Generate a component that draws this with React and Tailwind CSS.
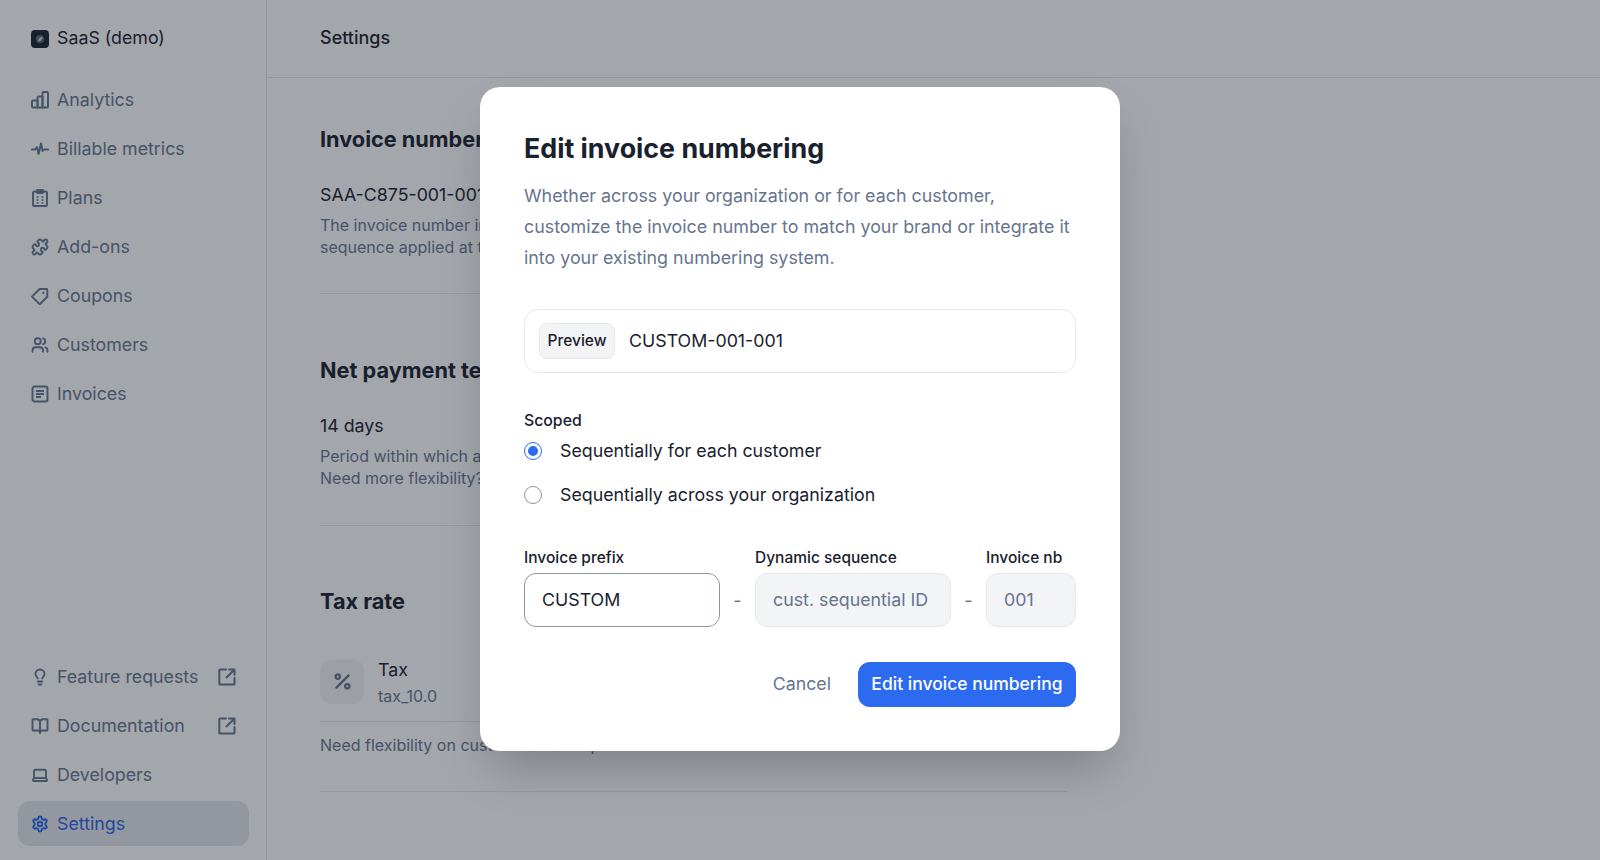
import { BookOpen, Laptop, Lightbulb, Percent, Puzzle, Settings, Users } from "lucide-react";

function ChartIcon() {
  return (
    <svg width="18" height="18" viewBox="0 0 18 18" fill="none" stroke="currentColor" strokeWidth="1.9" strokeLinejoin="round">
      <path d="M1 10.5c0-.6.4-1 1-1h4.5v7H2c-.6 0-1-.4-1-1v-5Z" />
      <path d="M6.5 6.5c0-.6.4-1 1-1h4v11h-5v-10Z" />
      <path d="M11.5 2c0-.6.4-1 1-1H16c.6 0 1 .4 1 1v13.5c0 .6-.4 1-1 1h-4.5V2Z" />
    </svg>
  );
}

function PulseIcon() {
  return (
    <svg width="18" height="18" viewBox="0 0 18 18" fill="none" stroke="currentColor" strokeWidth="2" strokeLinecap="round" strokeLinejoin="round">
      <path d="M.8 9.5h3.4L6 7l1.6 7L10 3.5 11.6 11l1.2-1.5h4.4" />
    </svg>
  );
}

function PlansIcon() {
  return (
    <svg width="18" height="18" viewBox="0 0 18 18" fill="none" stroke="currentColor" strokeWidth="1.9" strokeLinejoin="round">
      <rect x="2" y="2.5" width="14" height="14.5" rx="1.6" />
      <rect x="5.8" y="1" width="6.4" height="3" rx="0.8" fill="currentColor" />
      <path d="M5.5 8h2M5.5 11h2M5.5 14h2M10.5 8h2M10.5 11h2M10.5 14h2" strokeWidth="1.7" />
    </svg>
  );
}

function TagIcon() {
  return (
    <svg width="18" height="18" viewBox="0 0 18 18" fill="none" stroke="currentColor" strokeWidth="1.9" strokeLinejoin="round">
      <path d="M1 9.6 8.6 2h7.1c.3 0 .6.3.6.6v7.1L8.7 17.2 1 9.6Z" />
      <circle cx="12.4" cy="5.9" r="1.1" fill="currentColor" stroke="none" />
    </svg>
  );
}

function InvoiceIcon() {
  return (
    <svg width="18" height="18" viewBox="0 0 18 18" fill="none" stroke="currentColor" strokeWidth="1.9">
      <rect x="1.5" y="1.5" width="15" height="15" rx="2" />
      <path d="M5 6h8M5 9h8M5 12h5" />
    </svg>
  );
}

function ExternalIcon() {
  return (
    <svg width="18" height="18" viewBox="0 0 18 18" fill="none" stroke="currentColor" strokeWidth="2" strokeLinecap="round" strokeLinejoin="round">
      <path d="M8 1.5H2.2c-.5 0-.9.4-.9.9v13.3c0 .5.4.9.9.9h13.4c.5 0 .9-.4.9-.9V10" />
      <path d="M8.5 9.5 16 2M11 1.5h5.5V7" />
    </svg>
  );
}

function Logo() {
  return (
    <div className="flex h-[18px] w-[18px] items-center justify-center rounded-[4px] bg-[#19212e]">
      <svg width="10" height="10" viewBox="0 0 10 10" fill="none">
        <circle cx="5" cy="5" r="4" fill="#5b6678" />
        <path d="M3 7.5C3 5 5 3 7.5 3 7.5 5.5 5.5 7.5 3 7.5Z" fill="#c5cad3" />
      </svg>
    </div>
  );
}

function NavItem({ icon, label, external, active }) {
  return (
    <div
      className={
        active
          ? "flex h-[45px] items-center gap-2 rounded-xl bg-[#e5e7eb] px-[13px] text-[#2563eb]"
          : "flex h-[45px] items-center gap-2 rounded-xl px-[13px] text-[#66758f]"
      }
    >
      {icon}
      <span className="flex-1 pt-px text-[17.8px]">{label}</span>
      {external ? <ExternalIcon /> : null}
    </div>
  );
}

function Divider() {
  return <div className="h-px bg-[#e5e7eb]" />;
}

function Radio({ checked, label }) {
  return (
    <div className="flex h-10 items-center gap-[18px]">
      {checked ? (
        <span className="flex h-[18px] w-[18px] items-center justify-center rounded-full border border-[#2c6af0]">
          <span className="h-[10px] w-[10px] rounded-full bg-[#2c6af0]" />
        </span>
      ) : (
        <span className="h-[18px] w-[18px] rounded-full border border-[#8c95a6]" />
      )}
      <span className="pt-px text-[17.8px] text-[#19212e]">{label}</span>
    </div>
  );
}

function Field({ label, value, width, disabled }) {
  return (
    <div className={width}>
      <div className="mb-1 h-[22px] text-[15.5px] leading-[22px] font-medium text-[#19212e]">{label}</div>
      <div
        className={
          disabled
            ? "flex h-[54px] items-center rounded-xl border border-[#e5e7eb] bg-[#f3f4f6] px-[17px] text-[17.8px] whitespace-nowrap text-[#66758f]"
            : "flex h-[54px] items-center rounded-xl border border-[#8c95a6] bg-white px-[17px] text-[17.8px] text-[#19212e]"
        }
      >
        {value}
      </div>
    </div>
  );
}

function Dash() {
  return <div className="flex h-[54px] w-[35px] items-center justify-center self-end text-[18px] text-[#66758f]">-</div>;
}

export default function App() {
  return (
    <div className="relative flex h-screen overflow-hidden bg-white font-['Inter',sans-serif]">
      <aside className="flex w-[267px] shrink-0 flex-col border-r border-[#e5e7eb] pr-[17px] pb-[14px] pl-[18px]">
        <div className="flex h-[77px] items-center gap-2 pl-[13px]">
          <Logo />
          <span className="text-[17.8px] text-[#19212e]">SaaS (demo)</span>
        </div>
        <nav className="flex flex-1 flex-col justify-between">
          <div className="flex flex-col gap-1">
            <NavItem icon={<ChartIcon />} label="Analytics" />
            <NavItem icon={<PulseIcon />} label="Billable metrics" />
            <NavItem icon={<PlansIcon />} label="Plans" />
            <NavItem icon={<Puzzle size={18} strokeWidth={2.5} />} label="Add-ons" />
            <NavItem icon={<TagIcon />} label="Coupons" />
            <NavItem icon={<Users size={18} strokeWidth={2.5} />} label="Customers" />
            <NavItem icon={<InvoiceIcon />} label="Invoices" />
          </div>
          <div className="flex flex-col gap-1">
            <NavItem icon={<Lightbulb size={18} strokeWidth={2.5} />} label="Feature requests" external />
            <NavItem icon={<BookOpen size={18} strokeWidth={2.5} />} label="Documentation" external />
            <NavItem icon={<Laptop size={18} strokeWidth={2.5} />} label="Developers" />
            <NavItem icon={<Settings size={18} strokeWidth={2.5} />} label="Settings" active />
          </div>
        </nav>
      </aside>

      <main className="flex-1">
        <header className="flex h-[78px] items-center border-b border-[#e5e7eb] px-[53px] pb-[2px] text-[18px] font-medium text-[#19212e]">
          Settings
        </header>
        <div className="w-[800px] pt-[45px] pl-[53px]">
          <section>
            <h2 className="h-8 text-[21.7px] leading-8 font-bold text-[#19212e]">Invoice numbering</h2>
            <p className="mt-7 h-6 text-[17.8px] leading-6 text-[#19212e]">SAA-C875-001-001</p>
            <p className="mt-[7px] text-[16px] leading-[22px] text-[#66758f]">
              The invoice number in
              <br />
              sequence applied at t
            </p>
            <div className="mt-[35px]">
              <Divider />
            </div>
          </section>
          <section className="mt-[60px]">
            <h2 className="h-8 text-[21.7px] leading-8 font-bold text-[#19212e]">Net payment term</h2>
            <p className="mt-7 h-6 text-[17.8px] leading-6 text-[#19212e]">14 days</p>
            <p className="mt-[7px] text-[16px] leading-[22px] text-[#66758f]">
              Period within which a
              <br />
              Need more flexibility?
            </p>
            <div className="mt-9">
              <Divider />
            </div>
          </section>
          <section className="mt-[59px]">
            <h2 className="h-8 text-[21.7px] leading-8 font-bold text-[#19212e]">Tax rate</h2>
            <div className="mt-[42px] flex h-[45px] items-start gap-[14px]">
              <div className="flex h-[45px] w-11 items-center justify-center rounded-xl bg-[#f3f4f6] text-[#66758f]">
                <Percent size={21} strokeWidth={2.6} />
              </div>
              <div>
                <div className="text-[17.8px] leading-[22px] text-[#19212e]">Tax</div>
                <div className="mt-1 text-[16px] leading-[22px] text-[#66758f]">tax_10.0</div>
              </div>
            </div>
            <div className="mt-[17px]">
              <Divider />
            </div>
            <p className="mt-3 text-[16px] leading-[22px] text-[#66758f]">Need flexibility on custom tax rates per customer.</p>
            <div className="mt-[35px]">
              <Divider />
            </div>
          </section>
        </div>
      </main>

      <div className="absolute inset-0 bg-[#19212e]/40" />

      <div className="absolute top-[87px] left-[480px] w-[640px] rounded-[20px] bg-white px-11 pt-11 pb-11 shadow-2xl">
        <h1 className="h-[34px] text-[26.8px] leading-[34px] font-bold text-[#19212e]">Edit invoice numbering</h1>
        <p className="mt-[15px] text-[17.85px] leading-[31px] text-[#66758f]">
          Whether across your organization or for each customer,
          <br />
          customize the invoice number to match your brand or integrate it
          <br />
          into your existing numbering system.
        </p>

        <div className="mt-9 flex h-16 items-center gap-[14px] rounded-[14px] border border-[#e5e7eb] px-[14px]">
          <span className="flex h-9 w-[76px] items-center justify-center rounded-lg border border-[#e5e7eb] bg-[#f3f4f6] text-[15.5px] font-medium text-[#19212e]">
            Preview
          </span>
          <span className="text-[17.8px] text-[#19212e]">CUSTOM-001-001</span>
        </div>

        <div className="mt-9 h-[22px] pt-px text-[15.8px] leading-[22px] font-medium text-[#19212e]">Scoped</div>
        <div className="flex flex-col gap-1">
          <Radio checked label="Sequentially for each customer" />
          <Radio label="Sequentially across your organization" />
        </div>

        <div className="mt-8 flex">
          <Field label="Invoice prefix" value="CUSTOM" width="w-[196px]" />
          <Dash />
          <Field label="Dynamic sequence" value="cust. sequential ID" width="w-[196px]" disabled />
          <Dash />
          <Field label="Invoice nb" value="001" width="flex-1" disabled />
        </div>

        <div className="mt-[35px] flex items-center justify-end gap-[27px]">
          <span className="text-[17.8px] text-[#66758f]">Cancel</span>
          <button className="h-[45px] w-[218px] rounded-xl bg-[#2c6af0] text-[17.5px] font-medium text-white">
            Edit invoice numbering
          </button>
        </div>
      </div>
    </div>
  );
}
